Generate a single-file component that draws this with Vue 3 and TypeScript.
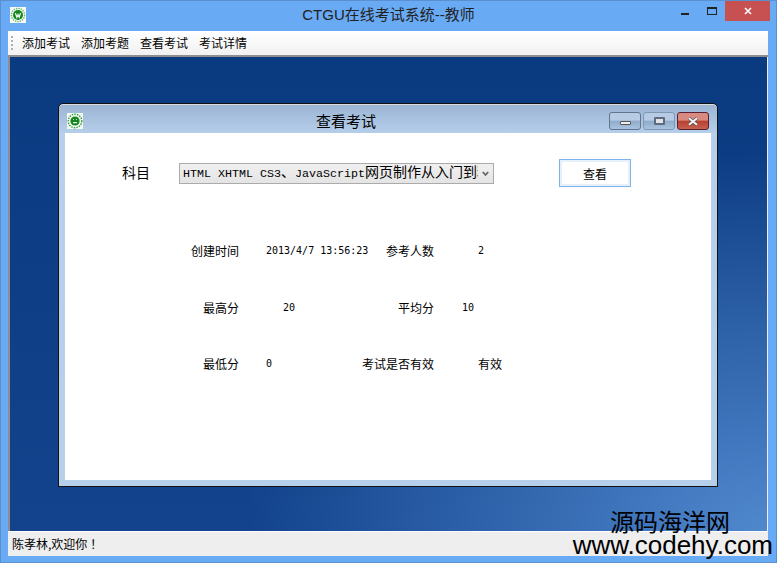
<script setup lang="ts">
const menus = ['添加考试', '添加考题', '查看考试', '考试详情']

const rows = [
  { label: '创建时间', value: '2013/4/7 13:56:23', at: 'at-a', label2: '参考人数', value2: '2', at2: 'at-d' },
  { label: '最高分', value: '20', at: 'at-b', label2: '平均分', value2: '10', at2: 'at-c' },
  { label: '最低分', value: '0', at: 'at-a', label2: '考试是否有效', value2: '有效', at2: 'at-d cjk' }
]
</script>

<template>
  <div class="shell">
    <header class="titlebar">
      <svg class="logo" viewBox="0 0 16 16">
        <rect width="16" height="16" fill="#f6faf6" />
        <circle cx="8" cy="8" r="6.6" fill="none" stroke="#6cb86c" stroke-width="1.4" stroke-dasharray="1.4 1" />
        <circle cx="8" cy="8" r="5" fill="#14861e" />
        <path d="M5.4 6l1.4 4.2L8 7.6l1.2 2.6L10.6 6" fill="none" stroke="#e4f2e4" stroke-width="1.3" />
      </svg>
      <span class="app-title">CTGU在线考试系统--教师</span>
      <div class="win-controls">
        <svg class="ctl-min" viewBox="0 0 8 2"><rect width="8" height="2" fill="#222" /></svg>
        <svg class="ctl-max" viewBox="0 0 10 8"><rect x="0.5" y="0.5" width="9" height="7" fill="none" stroke="#222" /><rect width="10" height="2" fill="#222" /></svg>
        <div class="ctl-close">
          <svg viewBox="0 0 8 8"><path d="M1 1l6 6M7 1L1 7" stroke="#fff" stroke-width="1.6" /></svg>
        </div>
      </div>
    </header>

    <div class="frame">
      <nav class="toolbar">
        <span class="grip"></span>
        <span v-for="m in menus" :key="m" class="menu-item">{{ m }}</span>
      </nav>

      <main class="desktop">
        <section class="dialog">
          <header class="dialog-bar">
            <svg class="dialog-logo" viewBox="0 0 16 16">
              <rect width="16" height="16" fill="#f2f7f2" />
              <circle cx="8" cy="8" r="6.8" fill="none" stroke="#2f9a2f" stroke-width="1.4" stroke-dasharray="1.4 1.2" />
              <circle cx="8" cy="8" r="4.6" fill="#14861e" />
              <path d="M6 6.5h.8M9.2 6.5h.8M6 9.6h4" stroke="#e4f2e4" stroke-width="1.1" />
            </svg>
            <span class="dialog-title">查看考试</span>
            <div class="dialog-controls">
              <button class="dc dc-min" type="button"><i></i></button>
              <button class="dc dc-max" type="button"><i></i></button>
              <button class="dc dc-close" type="button">
                <svg viewBox="0 0 12 9"><path d="M2 1.2l8 6.6M10 1.2l-8 6.6" stroke="#555" stroke-width="3.2" /><path d="M2 1.2l8 6.6M10 1.2l-8 6.6" stroke="#f4f4f4" stroke-width="2" /></svg>
              </button>
            </div>
          </header>

          <div class="dialog-body">
            <div class="query-row">
              <label class="subject-label">科目</label>
              <!-- 下拉框里英文 7px 宽、中文 14px 宽，原生 select 做不到混排 -->
              <div class="subject-select">
                <span class="select-text"><span class="latin">HTML XHTML CS3</span>、<span class="latin">JavaScript</span>网页制作从入门到精通</span>
                <svg class="chevron" viewBox="0 0 7 6"><path d="M.8 1l2.7 3L6.2 1" fill="none" stroke="#666" stroke-width="1.8" /></svg>
              </div>
              <button class="view-btn" type="button">查看</button>
            </div>

            <div class="stats">
              <div v-for="r in rows" :key="r.label" class="stat-row">
                <span class="lbl">{{ r.label }}</span>
                <span class="val" :class="r.at">{{ r.value }}</span>
                <span class="lbl lbl2">{{ r.label2 }}</span>
                <span class="val" :class="r.at2">{{ r.value2 }}</span>
              </div>
            </div>
          </div>
        </section>
      </main>

      <footer class="statusbar">陈孝林,欢迎你<span class="bang">！</span></footer>
    </div>

    <div class="watermark">
      <div class="wm-cn">源码海洋网</div>
      <div class="wm-en">www.codehy.com</div>
    </div>
  </div>
</template>

<style scoped>
.shell {
  position: relative;
  width: 777px;
  height: 563px;
  display: flex;
  flex-direction: column;
  overflow: hidden;
  background: #69aaf5;
  box-shadow: inset 0 0 0 1px #5a8fd0;
  font-family: "Noto Sans CJK SC", sans-serif;
  color: #000;
}

.titlebar {
  position: relative;
  height: 31px;
  flex: none;
  display: flex;
  align-items: center;
  justify-content: center;
}

.logo {
  position: absolute;
  left: 10px;
  top: 7px;
  width: 16px;
  height: 16px;
}

.app-title {
  font-size: 15px;
  line-height: 20px;
  margin-top: -1px;
  color: #222;
  font-family: "Liberation Sans", "Noto Sans CJK SC", sans-serif;
}

.win-controls {
  position: absolute;
  right: 7px;
  top: 1px;
  display: flex;
  align-items: flex-start;
}

.ctl-min {
  width: 8px;
  height: 2px;
  margin-top: 12px;
}

.ctl-max {
  width: 10px;
  height: 8px;
  margin: 6px 8px 0 18px;
}

.ctl-close {
  width: 45px;
  height: 20px;
  background: #c75050;
  display: flex;
  align-items: center;
  justify-content: center;
}

.ctl-close svg {
  width: 8px;
  height: 8px;
}

.frame {
  flex: 1;
  display: flex;
  flex-direction: column;
  margin: 0 9px 7px 8px;
  min-height: 0;
}

.toolbar {
  height: 24px;
  flex: none;
  display: flex;
  align-items: center;
  padding-left: 3px;
  background: linear-gradient(#fff, #f1f1f1);
  border-bottom: 2px solid #8e8e8e;
}

.grip {
  width: 2px;
  height: 14px;
  margin-right: 9px;
  background: repeating-linear-gradient(#b0b0b0 0 2px, transparent 2px 4px);
}

.menu-item {
  font-size: 12px;
  line-height: 16px;
  margin-right: 11px;
  white-space: nowrap;
}

.desktop {
  position: relative;
  flex: 1;
  min-height: 0;
  background:
    radial-gradient(ellipse 520px 380px at 100% 100%, #5088ce 0%, rgba(80, 136, 206, 0) 100%),
    linear-gradient(#0a3a80, #12438c);
  border-left: 2px solid #8e8e8e;
  border-right: 1px solid #eee;
}

/* 子窗体，桌面上的自由窗口 */
.dialog {
  position: absolute;
  left: 48px;
  top: 46px;
  width: 660px;
  height: 384px;
  box-sizing: border-box;
  display: flex;
  flex-direction: column;
  border: 1px solid #111;
  border-radius: 5px 5px 0 0;
  padding: 0 6px 6px 6px;
  background: linear-gradient(#9ab4d2, #b6cfeb 30px, #b6cfeb);
  box-shadow: inset 0 1px 0 #ddd;
}

.dialog-bar {
  position: relative;
  height: 29px;
  flex: none;
  display: flex;
  align-items: center;
  justify-content: center;
}

.dialog-logo {
  position: absolute;
  left: 2px;
  top: 9px;
  width: 16px;
  height: 16px;
}

.dialog-title {
  font-size: 15px;
  line-height: 20px;
  margin-top: 5px;
  margin-right: 84px;
}

.dialog-controls {
  position: absolute;
  right: 2px;
  top: 8px;
  display: flex;
  gap: 2px;
}

.dc {
  width: 32px;
  height: 18px;
  padding: 0;
  box-sizing: border-box;
  border: 1px solid #5f7590;
  border-radius: 3px;
  display: flex;
  align-items: center;
  justify-content: center;
  background: linear-gradient(#b7cce4 0 45%, #8fabca 50%, #a9c3df 100%);
}

.dc-max {
  border-color: #7f97b2;
}

.dc-min i {
  width: 11px;
  height: 4px;
  margin-top: 4px;
  box-sizing: border-box;
  border: 1px solid #555;
  background: #eee;
  border-radius: 1px;
}

.dc-max i {
  width: 11px;
  height: 8px;
  box-sizing: border-box;
  border: 2px solid #5f6b80;
  background: #e4e4e4;
  border-radius: 1px;
}

.dc-close {
  border-color: #5a2030;
  background: linear-gradient(#d98a80 0 45%, #bb4030 50%, #c56050 100%);
}

.dc-close svg {
  width: 12px;
  height: 9px;
}

.dialog-body {
  flex: 1;
  min-height: 0;
  background: #fff;
}

.query-row {
  display: flex;
  align-items: center;
  height: 28px;
  margin-top: 26px;
  padding-left: 57px;
}

.subject-label {
  width: 57px;
  font-size: 14px;
  line-height: 20px;
  margin-top: -2px;
}

.subject-select {
  position: relative;
  width: 315px;
  height: 21px;
  box-sizing: border-box;
  padding: 0 15px 0 3px;
  display: flex;
  align-items: center;
  border: 1px solid #ababab;
  background: linear-gradient(#f0f0f0, #e4e4e4);
  font-size: 14px;
}

.select-text {
  flex: 1;
  overflow: hidden;
  white-space: nowrap;
  line-height: 19px;
}

.latin {
  font-family: "Liberation Mono", monospace;
  font-size: 11.67px;
}

.chevron {
  position: absolute;
  right: 4px;
  top: 7px;
  width: 7px;
  height: 6px;
}

.view-btn {
  width: 72px;
  height: 28px;
  margin-left: 65px;
  padding: 0;
  box-sizing: border-box;
  border: 1px solid #7eb4ea;
  box-shadow: inset 0 0 0 2px #e6f0fb;
  background: #fff;
  font: 12px "Noto Sans CJK SC", sans-serif;
  color: #000;
}

.stats {
  display: flex;
  flex-direction: column;
  gap: 40.5px;
  margin-top: 56px;
  font-size: 12px;
  line-height: 16px;
}

.stat-row {
  display: grid;
  grid-template-columns: 174px 27px 17px 151px 28px 16px 40px;
}

.stat-row > * {
  grid-row: 1;
}

.lbl {
  grid-column: 1;
  text-align: right;
  white-space: nowrap;
}

.lbl2 {
  grid-column: 3 / 5;
}

.val {
  font-family: "DejaVu Sans Mono", "Noto Sans CJK SC", monospace;
  font-size: 10px;
  white-space: nowrap;
}

.at-a {
  grid-column: 3;
}

.at-b {
  grid-column: 4;
}

.at-c {
  grid-column: 6;
}

.at-d {
  grid-column: 7;
}

.val.cjk {
  font-family: "Noto Sans CJK SC", sans-serif;
  font-size: 12px;
}

.statusbar {
  height: 25px;
  flex: none;
  box-sizing: border-box;
  padding: 4px 0 0 4px;
  font-size: 12px;
  line-height: 16px;
  background: #eeeeee;
  border-top: 1px solid #fff;
}

/* SC 的全角叹号靠左，TC 的居中，和截图一致 */
.bang {
  font-family: "Noto Sans CJK TC", sans-serif;
}

.watermark {
  position: absolute;
  right: 4px;
  top: 508px;
  text-align: right;
  color: #000;
  pointer-events: none;
}

.wm-cn {
  font-size: 24px;
  line-height: 25px;
  margin-right: 43px;
}

.wm-en {
  font-family: "Liberation Sans", sans-serif;
  font-size: 26px;
  line-height: 24px;
}
</style>

<style>
html,
body {
  margin: 0;
  background: #69aaf5;
}
</style>
